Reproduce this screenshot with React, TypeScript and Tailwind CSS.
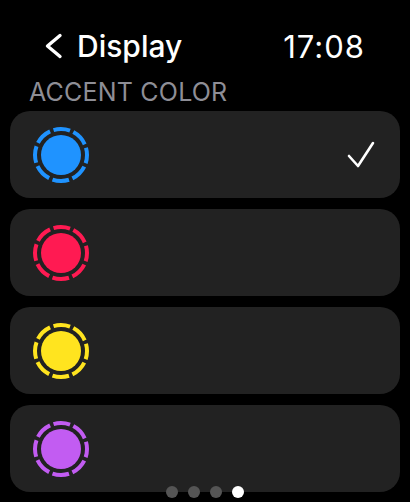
import React from "react";

const colors = ["#1f93ff", "#ff1a52", "#ffe41f", "#c25cf2"];

function Swatch({ color }: { color: string }) {
    const c = 2 * Math.PI * 26;
    const seg = c / 8;
    return (
        <svg width="60" height="60" viewBox="0 0 60 60">
            <circle
                cx="30"
                cy="30"
                r="26"
                fill="none"
                stroke={color}
                strokeWidth="4"
                strokeDasharray={`${seg - 3.6} 3.6`}
                strokeDashoffset={(seg - 3.6) / 2}
            />
            <circle cx="30" cy="30" r="20" fill={color} />
        </svg>
    );
}

function App() {
    return (
        <div className="relative w-[410px] h-[502px] overflow-hidden bg-black text-white font-['Inter',sans-serif]">
            <div className="flex h-[40px] items-center justify-between pl-[43px] pr-[45px] mt-[26px]">
                <div className="flex items-center gap-[14px]">
                    <svg width="20" height="26" viewBox="0 0 20 26">
                        <path d="M17 2.5 L4.5 13 L17 23.5" fill="none" stroke="white" strokeWidth="3.4" strokeLinecap="round" strokeLinejoin="round" />
                    </svg>
                    <span className="text-[30px] font-medium leading-none tracking-[0px]">Display</span>
                </div>
                <span className="text-[31px] leading-none tracking-[1px]">17:08</span>
            </div>

            <div className="mt-[13px] pl-[29px] text-[25px] leading-[26px] text-[#8e8e96] tracking-[0.2px]">ACCENT COLOR</div>

            <div className="mt-[6px] flex flex-col gap-[11px] px-[10px]">
                {colors.map((col, i) => (
                    <div key={col} className="flex h-[87px] items-center justify-between rounded-[20px] bg-[#222222] pl-[21px] pr-[24px]">
                        <Swatch color={col} />
                        {i === 0 && (
                            <svg width="30" height="30" viewBox="0 0 30 30">
                                <path d="M3 16 L12 26 L27 3" fill="none" stroke="white" strokeWidth="2.6" strokeLinecap="round" strokeLinejoin="round" />
                            </svg>
                        )}
                    </div>
                ))}
            </div>

            <div className="absolute left-0 right-0 top-[486px] flex justify-center gap-[10px]">
                <div className="h-[12px] w-[12px] rounded-full bg-[#555555]" />
                <div className="h-[12px] w-[12px] rounded-full bg-[#555555]" />
                <div className="h-[12px] w-[12px] rounded-full bg-[#555555]" />
                <div className="h-[12px] w-[12px] rounded-full bg-white" />
            </div>
        </div>
    );
}

export default App;
